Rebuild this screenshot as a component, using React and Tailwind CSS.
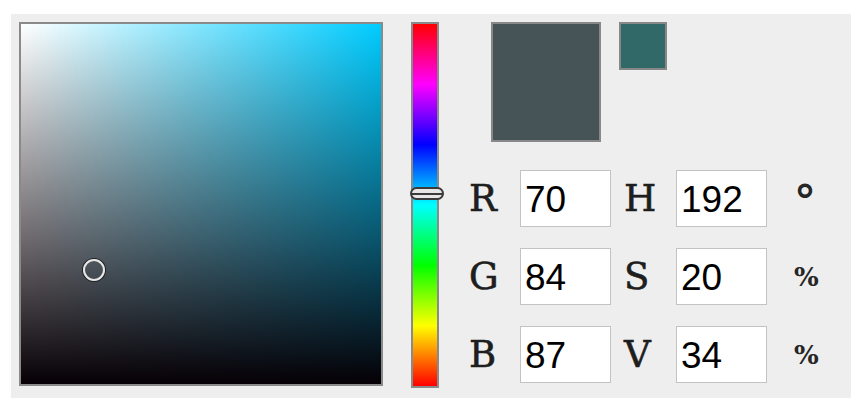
import { useState } from "react";

const labelFont = { fontFamily: '"DejaVu Serif", "Liberation Serif", serif' };
const inputFont = { fontFamily: '"Liberation Sans", Arial, sans-serif' };

function Field({ label, value, setValue, labelPad = "" }) {
  return (
    <>
      <div className={`text-[37px] leading-none text-[#1e1e1e] [-webkit-text-stroke:0.6px_#1e1e1e] ${labelPad}`} style={labelFont}>
        {label}
      </div>
      <input
        className="h-[57px] w-[91px] border border-[#c3c3c3] bg-white pl-[4px] pt-[3px] text-[37px] leading-none text-black outline-none"
        style={inputFont}
        value={value}
        onChange={(e) => setValue(e.target.value)}
      />
    </>
  );
}

export default function App() {
  const [rgb, setRgb] = useState({ r: "70", g: "84", b: "87" });
  const [hsv, setHsv] = useState({ h: "192", s: "20", v: "34" });

  const rows = [
    ["R", "r", "H", "h", "°"],
    ["G", "g", "S", "s", "%"],
    ["B", "b", "V", "v", "%"],
  ];

  return (
    <div className="min-h-screen bg-white pl-[11px] pt-[14px]">
      <div className="flex h-[384px] w-[840px] bg-[#eeeeee] pl-[8px] pt-[8px]">
        {/* saturation / value square */}
        <div className="relative h-[364px] w-[364px] border-2 border-[#8a8a8a] bg-[#00ccff]">
          <div className="absolute inset-0 bg-[linear-gradient(to_right,#ffffff,rgba(255,255,255,0))]" />
          <div className="absolute inset-0 bg-[linear-gradient(to_bottom,rgba(0,0,0,0),rgba(14,4,10,0.6)_60%,#060005)]" />
          <div className="absolute left-[62px] top-[235px] h-[22px] w-[22px] rounded-full border-2 border-[#e8e8e8] ring-1 ring-[#222]" />
        </div>

        {/* hue bar */}
        <div className="relative ml-[28px] h-[366px] w-[28px] border-2 border-[#8a8a8a] bg-[linear-gradient(to_bottom,#ff0000,#ff00ff,#0000ff,#00ffff,#00ff00,#ffff00,#ff0000)]">
          <div className="absolute left-[-3px] top-[163px] flex h-[13px] w-[34px] items-center rounded-full border-2 border-[#3a3a3a] bg-[#e6e6e6]">
            <div className="h-[2px] w-full bg-[#3a3a3a]" />
          </div>
        </div>

        <div className="flex flex-col">
          <div className="ml-[52px] flex items-start gap-[18px]">
            <div className="h-[120px] w-[110px] border-2 border-[#888888] bg-[#465457]" />
            <div className="h-[48px] w-[48px] border-2 border-[#888888] bg-[#316868]" />
          </div>

          <div className="ml-[30px] mt-[28px] grid grid-cols-[51px_91px_65px_91px_auto] items-center gap-y-[21px]">
            {rows.map(([a, ak, b, bk, unit]) => [
              <Field key={a} label={a} value={rgb[ak]} setValue={(v) => setRgb({ ...rgb, [ak]: v })} />,
              <Field
                key={b}
                label={b}
                labelPad="pl-[13px]"
                value={hsv[bk]}
                setValue={(v) => setHsv({ ...hsv, [bk]: v })}
              />,
              <div
                key={b + "u"}
                className={`pl-[27px] font-bold leading-none text-[#262626] ${unit === "°" ? "pt-[6px] text-[44px]" : "text-[26px]"}`}
                style={labelFont}
              >
                {unit}
              </div>,
            ])}
          </div>
        </div>
      </div>
    </div>
  );
}
